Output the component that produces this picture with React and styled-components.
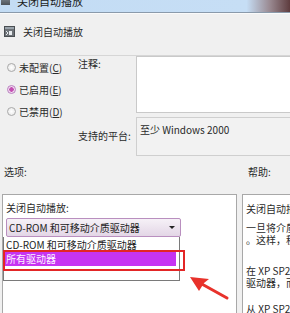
import React from 'react';
import styled, { createGlobalStyle } from 'styled-components';

const Global = createGlobalStyle`
  html, body { margin: 0; padding: 0; }
  body {
    width: 290px;
    height: 313px;
    overflow: hidden;
    background: #f0f0f0;
    font-family: "Noto Sans CJK SC", "Noto Sans", sans-serif;
    font-size: 10px;
    color: #2a2a2a;
  }
`;

const Window = styled.div`
  width: 290px;
  height: 313px;
  position: relative;
  overflow: hidden;
  display: flex;
  flex-direction: column;
`;

const TitleBar = styled.div`
  height: 12px;
  flex-shrink: 0;
  display: flex;
  align-items: flex-start;
  gap: 7px;
  padding-left: 1px;
  overflow: hidden;
  background: linear-gradient(to right, #c3dcf4 0%, #c6def5 85%, #9a8a92 93%, #5e3c3e 100%);
  border-bottom: 1px solid #8a9aab;
`;

const TitleIcon = styled.span`
  width: 9px;
  height: 5px;
  background: linear-gradient(#6d747b, #4c5258);
`;

const TitleText = styled.span`
  margin-top: -6px;
  font-size: 11px;
  line-height: 14px;
  color: #1b1b1b;
`;

const Header = styled.div`
  height: 43px;
  flex-shrink: 0;
  display: flex;
  align-items: flex-start;
  gap: 8px;
  padding: 12px 0 0 4px;
  box-sizing: border-box;
  border-bottom: 1px solid #d6d6d6;
  border-top: 1px solid #fafafa;
`;

const HeaderText = styled.span`
  font-size: 10px;
  line-height: 12px;
`;

const Settings = styled.div`
  display: grid;
  grid-template-columns: 78px 58px 1fr;
  grid-template-rows: 57px 43px 38px;
  height: 138px;
  flex-shrink: 0;
`;

const RadioColumn = styled.div`
  grid-row: 1 / 3;
  display: flex;
  flex-direction: column;
  padding-left: 7px;
`;

const RadioRow = styled.div`
  height: 22px;
  display: flex;
  align-items: center;
  gap: 3px;
`;

const RadioDot = styled.span`
  width: 9px;
  height: 9px;
  border-radius: 50%;
  box-sizing: border-box;
  border: 1px solid ${p => (p.$on ? '#b97fc0' : '#a9a9a9')};
  background: ${p =>
    p.$on
      ? 'radial-gradient(circle, #c44fb2 0 2px, #f0dcef 2.5px)'
      : 'radial-gradient(circle, #ffffff 0, #e4e4e4 100%)'};
`;

const Label = styled.div`
  font-size: 10px;
  line-height: 12px;
  padding-top: ${p => p.$top || 0}px;
  padding-left: ${p => p.$left || 0}px;
  white-space: nowrap;
`;

const Comment = styled.div`
  background: #fff;
  border: 1px solid #c9c9c9;
  margin-right: -4px;
  height: 57px;
  box-sizing: border-box;
`;

const Platform = styled.div`
  margin-top: 4px;
  margin-right: -4px;
  height: 39px;
  box-sizing: border-box;
  border: 1px solid #cfcfcf;
  background: #f2f2f2;
  padding: 6px 0 0 3px;
  line-height: 12px;
  white-space: nowrap;
`;

const Panels = styled.div`
  flex: 1;
  display: grid;
  grid-template-columns: 237px 1fr;
  column-gap: 5px;
`;

const LeftPanel = styled.div`
  position: relative;
  background: #fff;
  border-top: 1px solid #a8a8a8;
  border-left: 1px solid #a8a8a8;
  margin-left: 2px;
  border-right: 1px solid #a8a8a8;
  padding: 7px 0 0 3px;
`;

const RightPanel = styled.div`
  background: #fff;
  border-top: 1px solid #a8a8a8;
  border-left: 1px solid #a8a8a8;
  padding: 8px 0 0 3px;
  overflow: hidden;
`;

const Combo = styled.div`
  margin-top: 4px;
  width: 175px;
  height: 19px;
  box-sizing: border-box;
  border: 1px solid #b98fbf;
  border-radius: 2px;
  background: linear-gradient(#f6f1f7, #e3d6e6);
  display: flex;
  align-items: center;
  justify-content: space-between;
  padding: 0 5px 0 2px;
  line-height: 12px;
  white-space: nowrap;
  color: #1e1e1e;
`;

const Caret = styled.span`
  width: 0;
  height: 0;
  border-left: 3px solid transparent;
  border-right: 3px solid transparent;
  border-top: 3px solid #222;
`;

const DropList = styled.div`
  position: absolute;
  left: 0;
  top: 42px;
  width: 177px;
  background: #fff;
  border: 1px solid #7a7a7a;
  border-top: none;
  box-sizing: border-box;
  padding-top: 1px;
`;

const Option = styled.div`
  height: 14px;
  line-height: 14px;
  padding-left: 2px;
  white-space: nowrap;
  color: ${p => (p.$sel ? '#fdf6ff' : '#1e1e1e')};
  background: ${p => (p.$sel ? '#c634f2' : 'transparent')};
  margin-right: ${p => (p.$sel ? '3px' : '0')};
`;

const RedBox = styled.div`
  position: absolute;
  left: 3px;
  top: 250px;
  width: 182px;
  height: 21px;
  box-sizing: border-box;
  border: 2px solid #e32626;
`;

const Arrow = styled.svg`
  position: absolute;
  left: 180px;
  top: 268px;
`;

const HelpText = styled.div`
  line-height: 12px;
  white-space: nowrap;
  margin-bottom: ${p => p.$gap || 0}px;
`;

const U = styled.span`
  text-decoration: underline;
`;

const PolicyIcon = () => (
  <svg width="11" height="11" viewBox="0 0 11 11">
    <rect x="0.5" y="0.5" width="10" height="10" fill="#6e7378" stroke="#4a4e52" />
    <rect x="1" y="1" width="9" height="2" fill="#9aa3ab" />
    <path d="M5 5 L8 5 L8 9 L5 9 Z" fill="#e8ecef" />
    <path d="M2 5 L4 7 L2 9" stroke="#e8ecef" strokeWidth="1" fill="none" />
  </svg>
);

export default function App() {
  return (
    <Window>
      <Global />
      <TitleBar>
        <TitleIcon />
        <TitleText>关闭自动播放</TitleText>
      </TitleBar>
      <Header>
        <PolicyIcon />
        <HeaderText>关闭自动播放</HeaderText>
      </Header>
      <Settings>
        <RadioColumn>
          <RadioRow>
            <RadioDot />
            <span>未配置(<U>C</U>)</span>
          </RadioRow>
          <RadioRow>
            <RadioDot $on />
            <span>已启用(<U>E</U>)</span>
          </RadioRow>
          <RadioRow>
            <RadioDot />
            <span>已禁用(<U>D</U>)</span>
          </RadioRow>
        </RadioColumn>
        <Label $top={2}>注释:</Label>
        <Comment />
        <Label $top={17} style={{ gridColumn: 2 }}>支持的平台:</Label>
        <Platform>至少 Windows 2000</Platform>
        <Label $top={10} $left={4} style={{ gridColumn: '1 / 3' }}>选项:</Label>
        <Label $top={10} $left={112}>帮助:</Label>
      </Settings>
      <Panels>
        <LeftPanel>
          <Label>关闭自动播放:</Label>
          <Combo>
            <span>CD-ROM 和可移动介质驱动器</span>
            <Caret />
          </Combo>
          <DropList>
            <Option>CD-ROM 和可移动介质驱动器</Option>
            <Option $sel>所有驱动器</Option>
            <Option />
          </DropList>
        </LeftPanel>
        <RightPanel>
          <HelpText $gap={7}>关闭自动播放</HelpText>
          <HelpText>一旦将介质插入驱动器，自动播放就会</HelpText>
          <HelpText $gap={19}>。这样，程序的安装程序和音频</HelpText>
          <HelpText>在 XP SP2 和更高版本中，自动播放</HelpText>
          <HelpText $gap={14}>驱动器，而且对于非易失性</HelpText>
          <HelpText>从 XP SP2 开始</HelpText>
        </RightPanel>
      </Panels>
      <RedBox />
      <Arrow width="60" height="40" viewBox="0 0 60 40">
        <path d="M47 30 L20 15" stroke="#e8322b" strokeWidth="3" strokeLinecap="round" />
        <path d="M10 9 L29 11 L24 15 L19 23 Z" fill="#e8322b" />
      </Arrow>
    </Window>
  );
}
